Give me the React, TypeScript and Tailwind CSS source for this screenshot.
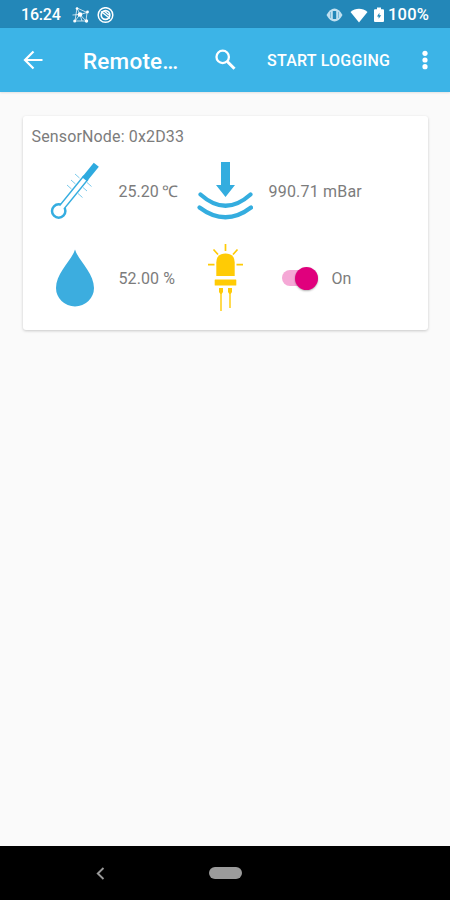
import type { ReactNode } from 'react';

function StatusBar() {
  return (
    <div className="flex h-[28px] shrink-0 items-center bg-[#2387b8] pl-[21px] pr-[20px] pt-[2px] text-white">
      <span className="w-[51px] whitespace-nowrap text-[16px] font-medium leading-none tracking-[-0.2px]">16:24</span>
      <svg className="h-[18px] w-[18px] shrink-0" viewBox="0 0 18 18" fill="none" stroke="currentColor" strokeWidth="0.9">
        <path d="M5 2 8 8.5 15 6.500 14 15 8 8.5 3 15 5 2M3 15 14 15M0.500 9 8 8.500 10 15M5 2 15 6.500" opacity="0.8" />
        <g fill="currentColor" stroke="none">
          <circle cx="8" cy="8.500" r="2.300" />
          <circle cx="5" cy="2.500" r="1.300" />
          <circle cx="15.500" cy="6" r="1.400" />
          <circle cx="14.500" cy="15" r="1.700" />
          <circle cx="2.700" cy="15" r="1.500" />
        </g>
      </svg>
      <svg className="ml-[7px] h-[17px] w-[17px] shrink-0" viewBox="0 0 17 17" fill="none" stroke="currentColor">
        <circle cx="8.500" cy="8" r="7.300" strokeWidth="1.500" />
        <circle cx="8.500" cy="8" r="4.300" strokeWidth="1.700" />
        <path d="M4 4.500 13 11.500M7 4 12 8" strokeWidth="1.400" />
      </svg>
      <div className="ml-auto flex items-center">
        <svg className="h-[14px] w-[17px]" viewBox="0 0 17 14">
          <path d="M0.500 7Q4 0.500 8.500 0.500T16.500 7Q13 13.500 8.500 13.500T0.500 7Z" fill="#c0e0f0" />
          <rect x="6.800" y="3" width="3.400" height="8" rx="0.500" fill="#2387b8" />
          <path d="M4.500 4v6M12.500 4v6" stroke="#6fb2d4" strokeWidth="0.800" />
        </svg>
        <svg className="ml-[7px] h-[15px] w-[18px]" viewBox="0 0 18 15" fill="currentColor">
          <path d="M0.500 4C5.500-0.300 12.500-0.300 17.500 4L9 14.500Z" />
        </svg>
        <svg className="ml-[6px] h-[16px] w-[10px]" viewBox="0 0 10 16">
          <path d="M3 0.500h4v1.700h2q1 0 1 1V14q0 1-1 1H1q-1 0-1-1V3.200q0-1 1-1h2Z" fill="currentColor" />
          <path d="M5.400 5.800 3 9.400h1.600v2.400l2.600-3.600H5.400Z" fill="#2387b8" />
        </svg>
        <span className="ml-[4px] w-[42px] whitespace-nowrap pt-px text-[16.500px] font-medium leading-none tracking-[0.200px]">100%</span>
      </div>
    </div>
  );
}

function Toolbar() {
  return (
    <div className="flex h-[64px] shrink-0 items-center bg-[#3cb4e7] pl-[23px] text-white shadow-[0_1px_2px_rgba(0,0,0,0.1)]">
      <svg className="h-[20px] w-[20px] shrink-0" viewBox="0 0 20 20" fill="none" stroke="currentColor" strokeWidth="2.200">
        <path d="M10.500 1.500 2 10l8.500 8.500M2 10h17.500" />
      </svg>
      <h1 className="ml-[40px] w-[132px] whitespace-nowrap pt-[2px] text-[22.500px] font-medium leading-[28px] tracking-[0.200px]">Remote…</h1>
      <svg className="h-[22px] w-[21px] shrink-0" viewBox="0 0 21 22" fill="none" stroke="currentColor">
        <circle cx="7.700" cy="7.900" r="6.200" strokeWidth="2.300" />
        <path d="m12.500 12.700 7 7" strokeWidth="3" />
      </svg>
      <button className="ml-[31px] w-[124px] whitespace-nowrap pt-[2px] text-left text-[16px] font-medium tracking-[0.250px]">START LOGGING</button>
      <svg className="ml-[31px] h-[20px] w-[6px] shrink-0" viewBox="0 0 6 20" fill="currentColor">
        <circle cx="3" cy="3.300" r="2.600" />
        <circle cx="3" cy="10" r="2.600" />
        <circle cx="3" cy="16.700" r="2.600" />
      </svg>
    </div>
  );
}

function ThermometerIcon() {
  return (
    <svg className="h-[58px] w-[50px]" viewBox="50 162 50 58" fill="none" stroke="#35ade0">
      <path d="M62 207 86 177.500" strokeWidth="6.800" />
      <circle cx="58.700" cy="211" r="6.700" strokeWidth="2.500" fill="#fff" />
      <path d="M60 209.500 86 177.500" stroke="#fff" strokeWidth="4" />
      <path d="M84.500 179.300 96.300 164.800" stroke="#2eaadf" strokeWidth="6.500" />
      <path d="m75 174 4.500 4M71 180l4.500 4M67 185l4.500 4M87 182.500l4.500 4M83 187.500l4 3.500M78 193.500l4.500 4" strokeWidth="1" opacity="0.65" />
    </svg>
  );
}

function PressureIcon() {
  return (
    <svg className="h-[58px] w-[56px]" viewBox="197 162 56 58" fill="none" stroke="#34addf">
      <path d="M221 162h9v23h5l-9.500 12-9.500-12h5Z" fill="#34addf" stroke="none" />
      <path d="M200.500 194.500Q225.500 217 250.500 194.500M199.500 207.500Q225.500 227 251 207.500" strokeWidth="4.200" strokeLinecap="round" />
    </svg>
  );
}

function HumidityIcon() {
  return (
    <svg className="h-[58px] w-[38px]" viewBox="0 0 38 58" fill="#3caddf">
      <path d="M19 0.500C22 11 38 24 38 39A19 18.500 0 0 1 0 39C0 24 16 11 19 0.500Z" />
    </svg>
  );
}

function LedIcon() {
  return (
    <svg className="h-[70px] w-[36px]" viewBox="207 243 36 70" fill="#ffcb05">
      <path d="M216.300 276v-13.500q0-9 9.200-9t9.200 9V276Z" />
      <rect x="214.700" y="279.500" width="21.600" height="6" rx="0.500" />
      <path d="M219 288h4v4l-1.300 2V311h-1.400V294l-1.300-2ZM228 288h4v4l-1.300 2v14h-1.400v-14l-1.300-2Z" />
      <path d="M225.500 244v7M213.500 249.500l4.500 5M237.500 249.500l-4.500 5M208 264.700h6.500M236.500 264.700h6.500" stroke="#ffcb05" strokeWidth="1.700" />
    </svg>
  );
}

function Switch() {
  return (
    <button role="switch" aria-checked="true" className="flex h-[16px] w-[36px] shrink-0 items-center justify-end rounded-full bg-[#f5a8d6]">
      <span className="h-[23px] w-[23px] shrink-0 rounded-full bg-[#e0007d] shadow-[0_1px_2px_rgba(0,0,0,0.3)]" />
    </button>
  );
}

function Cell({ icon, children }: { icon: ReactNode; children: ReactNode }) {
  return (
    <div className="flex items-center">
      <div className="flex w-[88px] shrink-0 justify-center">{icon}</div>
      <div className="flex items-center whitespace-nowrap pt-[2px]">{children}</div>
    </div>
  );
}

function SensorCard() {
  return (
    <section className="mx-auto mt-[24px] h-[214px] w-[405px] rounded-[3px] bg-white px-[8px] pt-[10px] shadow-[0_1px_3px_rgba(0,0,0,0.2)]">
      <h2 className="ml-px h-[21px] text-[16px] leading-[21px] tracking-[0.150px]">SensorNode: 0x2D33</h2>
      <div className="grid grid-cols-[150px_1fr] auto-rows-[87px]">
        <Cell icon={<ThermometerIcon />}>25.20&nbsp;<span className="-ml-px">℃</span></Cell>
        <Cell icon={<PressureIcon />}><span className="tracking-[0.200px]">990.71 mBar</span></Cell>
        <Cell icon={<HumidityIcon />}><span className="tracking-[0.100px]">52.00 %</span></Cell>
        <Cell icon={<LedIcon />}>
          <div className="-mt-px ml-[13px] flex items-center gap-[14px]">
            <Switch />
            <span className="pt-px">On</span>
          </div>
        </Cell>
      </div>
    </section>
  );
}

function NavigationBar() {
  return (
    <div className="flex h-[54px] shrink-0 items-center bg-black pl-[96px]">
      <svg className="h-[13px] w-[9px]" viewBox="0 0 9 13" fill="none" stroke="#999" strokeWidth="1.900">
        <path d="M7.500 1 1.800 6.500 7.500 12" />
      </svg>
      <div className="ml-[104px] h-[12px] w-[33px] rounded-full bg-[#9b9b9b]" />
    </div>
  );
}

export default function App() {
  return (
    <div className="flex h-screen w-full flex-col overflow-hidden bg-[#fafafa] font-[Roboto,sans-serif] text-[16px] text-[#7c7c7c]">
      <StatusBar />
      <Toolbar />
      <main className="flex-1">
        <SensorCard />
      </main>
      <NavigationBar />
    </div>
  );
}
